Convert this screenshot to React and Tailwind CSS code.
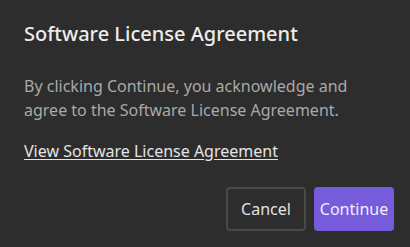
export default function App() {
  return (
    <div className="w-[410px] h-[247px] bg-[#2d2d2d] flex flex-col px-6 pt-5 pb-4 font-['Noto_Sans',sans-serif]">
      <h2 className="text-[20px] leading-7 font-medium text-[#ececec]">Software License Agreement</h2>
      <p className="mt-[26px] text-[16px] leading-6 text-[#a9a9a9]">
        By clicking Continue, you acknowledge and agree to the Software License Agreement.
      </p>
      <a href="#" className="mt-[17px] text-[16px] leading-6 text-[#e4e4e4] underline underline-offset-2 self-start">
        View Software License Agreement
      </a>
      <div className="mt-auto -mr-2 flex justify-end gap-2">
        <button className="w-20 h-11 rounded border-2 border-[#4a4a4a] text-[16px] text-[#e0e0e0]">Cancel</button>
        <button className="w-20 h-11 rounded bg-[#765cdb] text-[16px] text-[#f0eefc]">Continue</button>
      </div>
    </div>
  );
}
